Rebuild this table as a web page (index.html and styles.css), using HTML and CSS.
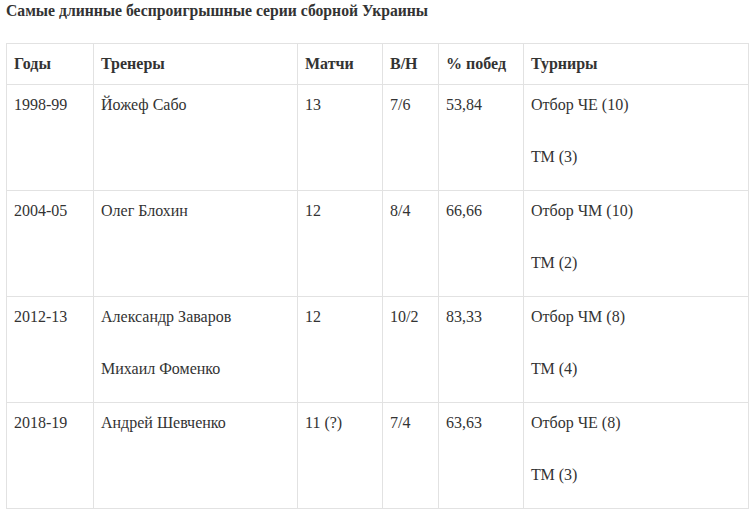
FILE: index.html
```html
<!DOCTYPE html>
<html lang="ru">
<head>
<meta charset="utf-8">
<title>Самые длинные беспроигрышные серии сборной Украины</title>
<link rel="stylesheet" href="styles.css">
</head>
<body>
<div class="page">
  <h2 class="title">Самые длинные беспроигрышные серии сборной Украины</h2>
  <table class="stats">
    <colgroup>
      <col class="c-years">
      <col class="c-coach">
      <col class="c-matches">
      <col class="c-wd">
      <col class="c-pct">
      <col class="c-tour">
    </colgroup>
    <thead>
      <tr><th>Годы</th><th>Тренеры</th><th>Матчи</th><th>В/Н</th><th>% побед</th><th>Турниры</th></tr>
    </thead>
    <tbody>
      <tr>
        <td><p>1998-99</p></td>
        <td><p>Йожеф Сабо</p></td>
        <td><p>13</p></td>
        <td><p>7/6</p></td>
        <td><p>53,84</p></td>
        <td><p>Отбор ЧЕ (10)</p><p>ТМ (3)</p></td>
      </tr>
      <tr>
        <td><p>2004-05</p></td>
        <td><p>Олег Блохин</p></td>
        <td><p>12</p></td>
        <td><p>8/4</p></td>
        <td><p>66,66</p></td>
        <td><p>Отбор ЧМ (10)</p><p>ТМ (2)</p></td>
      </tr>
      <tr>
        <td><p>2012-13</p></td>
        <td><p>Александр Заваров</p><p>Михаил Фоменко</p></td>
        <td><p>12</p></td>
        <td><p>10/2</p></td>
        <td><p>83,33</p></td>
        <td><p>Отбор ЧМ (8)</p><p>ТМ (4)</p></td>
      </tr>
      <tr>
        <td><p>2018-19</p></td>
        <td><p>Андрей Шевченко</p></td>
        <td><p>11 (?)</p></td>
        <td><p>7/4</p></td>
        <td><p>63,63</p></td>
        <td><p>Отбор ЧЕ (8)</p><p>ТМ (3)</p></td>
      </tr>
    </tbody>
  </table>
</div>
</body>
</html>
```

FILE: styles.css
```css
html, body {
  margin: 0;
  background: #ffffff;
}
body {
  font-family: "Liberation Serif", "Times New Roman", serif;
  font-size: 16px;
  color: #333333;
}
.page {
  padding: 1px 3px 0 6px;
}
.title {
  margin: 0 0 22px;
  font-size: 15.7px;
  line-height: 20px;
  font-weight: bold;
  color: #333333;
}
.stats {
  width: 743px;
  border-collapse: collapse;
  table-layout: fixed;
}
.c-years { width: 87px; }
.c-coach { width: 204px; }
.c-matches { width: 85px; }
.c-wd { width: 56px; }
.c-pct { width: 85px; }
.stats th,
.stats td {
  border: 1px solid #e2e2e2;
  text-align: left;
  vertical-align: top;
  line-height: 20px;
}
.stats th {
  padding: 10px 7px;
  font-weight: bold;
}
.stats td {
  padding: 10px 7px 8px;
}
.stats td p {
  margin: 0 0 32px;
}
.stats td p:last-child {
  margin-bottom: 15px;
}
```
